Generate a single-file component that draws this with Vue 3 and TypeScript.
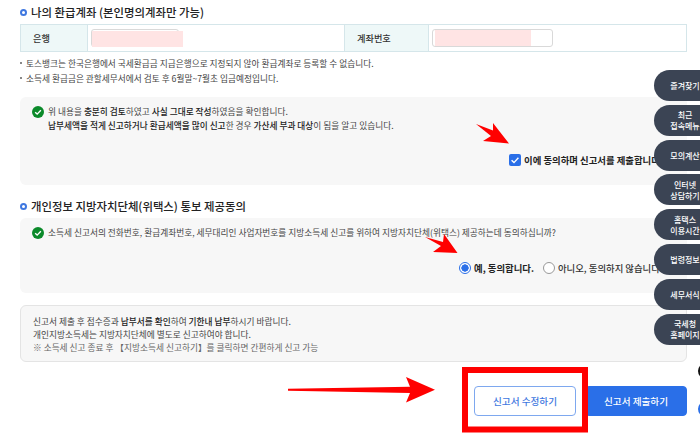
<script setup lang="ts">
const sideItems: string[][] = [
  ['즐겨찾기'],
  ['최근', '접속메뉴'],
  ['모의계산'],
  ['인터넷', '상담하기'],
  ['홈택스', '이용시간'],
  ['법령정보'],
  ['세무서식'],
  ['국세청', '홈페이지'],
]
</script>

<template>
  <div class="page">
    <main class="content">
      <h2 class="heading first"><span class="dot"></span>나의 환급계좌 (본인명의계좌만 가능)</h2>
      <div class="account">
        <div class="th">은행</div>
        <div class="td bank"><span class="field"><span class="mask"></span></span></div>
        <div class="th acct">계좌번호</div>
        <div class="td"><span class="field wide"><span class="mask"></span></span></div>
      </div>
      <ul class="notes">
        <li>토스뱅크는 한국은행에서 국세환급금 지급은행으로 지정되지 않아 환급계좌로 등록할 수 없습니다.</li>
        <li>소득세 환급금은 관할세무서에서 검토 후 6월말~7월초 입금예정입니다.</li>
      </ul>

      <section class="box box-one">
        <div class="check-row">
          <svg class="ok" viewBox="0 0 13 13" width="12" height="12"><circle cx="6.5" cy="6.5" r="6.5" fill="#0b8a2a"/><path d="M3.4 6.7l2.2 2.1 4-4.2" fill="none" stroke="#fff" stroke-width="1.5"/></svg>
          <p>위 내용을 <b>충분히 검토</b>하였고 <b>사실 그대로 작성</b>하였음을 확인합니다.<br><b>납부세액을 적게 신고하거나 환급세액을 많이 신고</b>한 경우 <b>가산세 부과 대상</b>이 됨을 알고 있습니다.</p>
        </div>
        <div class="agree">
          <span class="checkbox"><svg viewBox="0 0 12 12" width="12" height="12"><path d="M2.6 6.2l2.4 2.4 4.4-4.9" fill="none" stroke="#fff" stroke-width="1.4"/></svg></span>
          <b class="strong">이에 동의하며 신고서를 제출합니다.</b>
        </div>
      </section>

      <h2 class="heading second"><span class="dot"></span>개인정보 지방자치단체(위택스) 통보 제공동의</h2>
      <section class="box box-two">
        <div class="check-row">
          <svg class="ok" viewBox="0 0 13 13" width="12" height="12"><circle cx="6.5" cy="6.5" r="6.5" fill="#0b8a2a"/><path d="M3.4 6.7l2.2 2.1 4-4.2" fill="none" stroke="#fff" stroke-width="1.5"/></svg>
          <p>소득세 신고서의 전화번호, 환급계좌번호, 세무대리인 사업자번호를 지방소득세 신고를 위하여 지방자치단체(위택스) 제공하는데 동의하십니까?</p>
        </div>
        <div class="radios">
          <span class="radio on"></span><b class="yes strong">예, 동의합니다.</b>
          <span class="radio"></span><span class="no">아니오, 동의하지 않습니다.</span>
        </div>
      </section>

      <section class="notice">
        <p>신고서 제출 후 접수증과 <b>납부서를 확인</b>하여 <b>기한내 납부</b>하시기 바랍니다.</p>
        <p>개인지방소득세는 지방자치단체에 별도로 신고하여야 합니다.</p>
        <p class="muted">※ 소득세 신고 종료 후 【지방소득세 신고하기】를 클릭하면 간편하게 신고 가능</p>
      </section>

      <div class="actions">
        <button class="btn outline">신고서 수정하기</button>
        <button class="btn solid">신고서 제출하기</button>
      </div>
    </main>

    <nav class="side">
      <a v-for="(item, i) in sideItems" :key="i" class="side-item">
        <span v-for="line in item" :key="line">{{ line }}</span>
      </a>
    </nav>
    <span class="peek black"></span>
    <span class="peek blue"></span>

    <svg class="annot" viewBox="0 0 700 433" width="700" height="433">
      <polygon fill="#ff0000" points="476,124 493,130.5 493,123 509,143.5 483,141 491,136" />
      <polygon fill="#ff0000" points="425,237 443,242 444,234 457.5,253 433,252 441,246" />
      <polygon fill="#ff0000" points="288,388.8 410,386.8 406,377 435,389.7 406,402.5 410,393 288,390.8" />
      <rect x="465" y="370" width="120" height="59.5" fill="none" stroke="#ff0000" stroke-width="6" />
    </svg>
  </div>
</template>

<style scoped>
.page {
  position: relative;
  width: 700px;
  height: 433px;
  overflow: hidden;
  background: #fff;
  color: #333;
  font-family: "Noto Sans CJK KR", "Noto Sans", sans-serif;
  font-size: 8.7px;
}
.content {
  width: 667px;
  padding-left: 20px;
}
.heading {
  display: flex;
  align-items: center;
  margin: 0;
  font-size: 11.4px;
  font-weight: 500;
  line-height: 16px;
  color: #222;
  white-space: nowrap;
}
.heading.first { padding-top: 4px; }
.heading.second { margin-top: 13px; }
.dot {
  width: 7px;
  height: 7px;
  border: 2px solid #3f78e0;
  border-radius: 50%;
  margin-right: 4px;
  box-sizing: border-box;
}
.account {
  display: grid;
  grid-template-columns: 67px 256px 85px 1fr;
  height: 28px;
  margin-top: 4px;
  border: 1px solid #d5e6ea;
  box-sizing: border-box;
}
.th {
  display: flex;
  align-items: center;
  padding-left: 12px;
  background: #eef8f8;
  border-right: 1px solid #d5e6ea;
  font-size: 9.2px;
  font-weight: 500;
  color: #333;
}
.acct { border-left: 1px solid #d5e6ea; }
.td { display: flex; align-items: center; padding-left: 3px; }
.field {
  position: relative;
  width: 88px;
  height: 18px;
  border: 1px solid #d9d9d9;
  border-radius: 3px;
  box-sizing: border-box;
}
.field.wide { width: 121px; }
.mask {
  position: absolute;
  left: 0;
  top: 1px;
  width: 91px;
  height: 16px;
  background: #ffe4e4;
}
.field.wide .mask { left: 2px; top: 0; width: 96px; height: 16px; }
.notes {
  list-style: none;
  margin: 4px 0 0;
  padding: 0;
  line-height: 15px;
  color: #444;
}
.notes li { position: relative; padding-left: 6px; white-space: nowrap; }
.notes li::before {
  content: "";
  position: absolute;
  left: 0;
  top: 6px;
  width: 1.5px;
  height: 1.5px;
  background: #888;
}
.box {
  position: relative;
  background: #f7f7f7;
  border-radius: 6px;
  padding: 8px 12px;
  box-sizing: border-box;
  color: #444;
}
.box-one { height: 88px; margin-top: 11px; }
.box-two { height: 75px; margin-top: 4px; }
.check-row { display: flex; align-items: flex-start; gap: 4px; }
.check-row p { margin: 0; line-height: 14px; white-space: nowrap; }
.ok { flex: none; margin-top: 1px; }
b { font-weight: 500; color: #222; }
b.strong { font-weight: 700; }
.agree {
  display: flex;
  align-items: center;
  gap: 3px;
  position: absolute;
  left: 489px;
  top: 56px;
  font-size: 9.4px;
  white-space: nowrap;
}
.checkbox {
  display: flex;
  align-items: center;
  justify-content: center;
  width: 12px;
  height: 12px;
  border-radius: 2px;
  background: #2a6fe8;
}
.radios {
  position: absolute;
  left: 439px;
  top: 43px;
  display: flex;
  align-items: center;
  font-size: 9.4px;
  white-space: nowrap;
}
.radio {
  width: 12px;
  height: 12px;
  border: 1px solid #999;
  border-radius: 50%;
  background: #fff;
  box-sizing: border-box;
  margin-right: 3px;
}
.radio.on {
  border-color: #2a6fe8;
  background: radial-gradient(circle, #2a6fe8 0 3.4px, #fff 3.9px);
}
.yes { margin-right: 9px; }
.no { font-weight: 500; color: #333; }
.notice {
  height: 57px;
  margin-top: 12px;
  padding: 9px 12px;
  box-sizing: border-box;
  background: #f7f7f7;
  border: 1px solid #e4e4e4;
  border-radius: 6px;
  line-height: 13px;
  color: #444;
}
.notice p { margin: 0; white-space: nowrap; }
.muted { color: #666; }
.actions {
  display: flex;
  justify-content: flex-end;
  gap: 9px;
  margin-top: 24px;
}
.btn {
  width: 102px;
  height: 30px;
  padding: 0;
  border-radius: 4px;
  font-family: inherit;
  font-size: 9.6px;
  font-weight: 500;
}
.outline { background: #fff; border: 1px solid #7ea8ef; color: #3f78e0; }
.solid { background: #2a6fe8; border: 1px solid #2a6fe8; color: #fff; }
.side {
  position: absolute;
  left: 654px;
  top: 70px;
  display: flex;
  flex-direction: column;
  gap: 3.8px;
}
.side-item {
  display: flex;
  flex-direction: column;
  align-items: flex-end;
  justify-content: center;
  width: 60px;
  height: 31px;
  padding-right: 14px;
  box-sizing: border-box;
  border-radius: 16px 0 0 16px;
  background: #3b4454;
  color: #fff;
  font-size: 8px;
  font-weight: 500;
  line-height: 11px;
}
.side-item span { width: 30px; text-align: center; white-space: nowrap; }
.peek {
  position: absolute;
  left: 698px;
  width: 20px;
  height: 16px;
  border-radius: 8px;
}
.peek.black { top: 363px; background: #111; }
.peek.blue { top: 401px; background: #2a6fe8; }
.annot { position: absolute; left: 0; top: 0; pointer-events: none; }
</style>
